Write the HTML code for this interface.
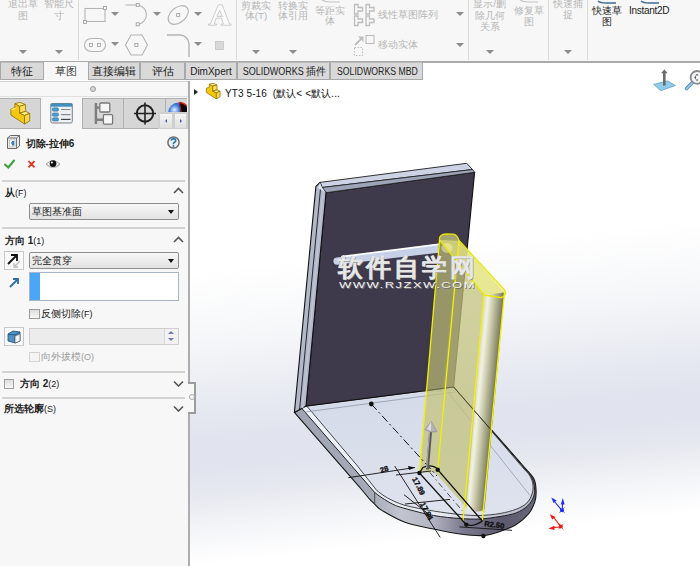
<!DOCTYPE html>
<html><head><meta charset="utf-8">
<style>
*{box-sizing:border-box}
html,body{margin:0;padding:0;width:700px;height:566px;overflow:hidden;background:#fff;font-family:"Liberation Sans",sans-serif;}
.a{position:absolute}
#ribbon{left:0;top:0;width:700px;height:63px;background:#f7f7f7;border-bottom:2px solid #a9a9a9}
.rt{position:absolute;font-size:9.8px;line-height:10px;color:#b6b6b6;text-align:center;white-space:nowrap}
.dk{color:#222}
.dd{position:absolute;width:0;height:0;border-left:4px solid transparent;border-right:4px solid transparent;border-top:4px solid #9a9a9a}
.sep{position:absolute;top:0;width:1px;height:60px;background:#dadada}
#tabs{left:0;top:62px;width:700px;height:19px;}
.tab{position:absolute;top:0;height:18px;background:#d9d9d9;border:1px solid #a8a8a8;border-top:1px solid #bdbdbd;font-size:11px;line-height:17px;text-align:center;color:#222;white-space:nowrap}
.tab.act{background:#f7f7f7;border-color:transparent;color:#444}
#panel{left:0;top:81px;width:189px;height:485px;background:#f7f7f7}
.hl{position:absolute;height:2px;background:#d3d3d3}
.b{font-weight:bold}
.pt{position:absolute;font-size:10px;line-height:11px;color:#222;white-space:nowrap}
</style></head><body>

<!-- RIBBON -->
<div id="ribbon" class="a">
  <div class="rt" style="left:-2.5px;top:-1.0px;width:50px">退出草</div>
  <div class="rt" style="left:-2.5px;top:10.5px;width:50px">图</div>
  <div class="rt" style="left:34.0px;top:-1.0px;width:50px">智能尺</div>
  <div class="rt" style="left:34.0px;top:10.5px;width:50px">寸</div>
  <div class="rt" style="left:231.0px;top:0.8px;width:50px">剪裁实</div>
  <div class="rt" style="left:231.0px;top:10.6px;width:50px">体(T)</div>
  <div class="rt" style="left:268.0px;top:0.8px;width:50px">转换实</div>
  <div class="rt" style="left:268.0px;top:10.6px;width:50px">体引用</div>
  <div class="rt" style="left:304.5px;top:6.0px;width:50px">等距实</div>
  <div class="rt" style="left:304.5px;top:16.0px;width:50px">体</div>
  <div class="rt" style="left:464.5px;top:-1.0px;width:50px">显示/删</div>
  <div class="rt" style="left:464.5px;top:10.8px;width:50px">除几何</div>
  <div class="rt" style="left:464.5px;top:22.0px;width:50px">关系</div>
  <div class="rt" style="left:503.6px;top:5.6px;width:50px">修复草</div>
  <div class="rt" style="left:503.6px;top:17.0px;width:50px">图</div>
  <div class="rt" style="left:542.6px;top:-1.5px;width:50px">快速捕</div>
  <div class="rt" style="left:542.6px;top:9.7px;width:50px">捉</div>
  <div class="rt dk" style="left:582.0px;top:6.0px;width:50px">快速草</div>
  <div class="rt dk" style="left:582.0px;top:17.0px;width:50px">图</div>
  <div class="dd" style="left:18.5px;top:49.5px;border-top-color:#8c8c8c"></div>
  <div class="dd" style="left:55.0px;top:49.5px;border-top-color:#8c8c8c"></div>
  <div class="sep" style="left:78px"></div>
  <div class="dd" style="left:251.5px;top:49.5px;border-top-color:#8c8c8c"></div>
  <div class="dd" style="left:288.5px;top:49.5px;border-top-color:#8c8c8c"></div>
  <div class="sep" style="left:236px"></div>
  <div class="rt" style="left:378px;top:10px;text-align:left;font-size:10px">线性草图阵列</div>
  <div class="dd" style="left:456.0px;top:12.0px;border-top-color:#8c8c8c"></div>
  <div class="rt" style="left:378px;top:40px;text-align:left;font-size:10px">移动实体</div>
  <div class="dd" style="left:456.0px;top:43.0px;border-top-color:#8c8c8c"></div>
  <div class="sep" style="left:468px"></div>
  <div class="dd" style="left:486.0px;top:49.5px;border-top-color:#8c8c8c"></div>
  <div class="sep" style="left:548px"></div>
  <div class="dd" style="left:563.7px;top:49.5px;border-top-color:#8c8c8c"></div>
  <div class="sep" style="left:587px"></div>
  <div class="rt dk" style="left:629px;top:6px;text-align:left;font-size:10px;letter-spacing:-0.3px">Instant2D</div>
  <div class="dd" style="left:111.0px;top:12.0px;border-top-color:#8c8c8c"></div>
  <div class="dd" style="left:153.4px;top:12.0px;border-top-color:#8c8c8c"></div>
  <div class="dd" style="left:194.4px;top:12.0px;border-top-color:#8c8c8c"></div>
  <div class="dd" style="left:111.0px;top:41.5px;border-top-color:#8c8c8c"></div>
  <div class="dd" style="left:194.4px;top:41.5px;border-top-color:#8c8c8c"></div>
  <svg class="a" style="left:0;top:0" width="700" height="62" viewBox="0 0 700 62">
    <g fill="none" stroke="#b4b4b4" stroke-width="1.1">
      <rect x="85" y="8.5" width="20" height="13"/>
      <path d="M125.5,5 H137.7 A9.7,9.7 0 0 1 137.7,24.3"/>
      <ellipse cx="178.2" cy="15" rx="11.5" ry="7.5" transform="rotate(-40 178.2 15)"/>
      <rect x="84.5" y="38.5" width="21" height="13" rx="6.5"/>
      <polygon points="131,35 142,35 147.5,45 142,55 131,55 125.5,45"/>
      <path d="M167,35 H180 A9,9 0 0 1 189,44 V57" stroke-width="1.4"/>
    </g>
    <g fill="#f6f6f6" stroke="#9c9c9c" stroke-width="0.8">
      <rect x="103.5" y="6.5" width="3" height="3"/><rect x="83.5" y="20.5" width="3" height="3"/>
      <rect x="136.2" y="3.5" width="3" height="3"/><rect x="136.2" y="22.8" width="3" height="3"/>
      <rect x="176.7" y="13.5" width="3" height="3"/>
      <rect x="89.5" y="43.5" width="3" height="3"/><rect x="97.5" y="43.5" width="3" height="3"/>
      <rect x="134.9" y="43.5" width="3" height="3"/>
    </g>
    <path d="M218.3,4.8 L222.3,4.8 L229.4,24 L231,24 L231,25.2 L221.3,25.2 L221.3,24 L223.4,24 L221.5,18.2 L216.2,18.2 L214.2,24 L216.6,24 L216.6,25.2 L208.6,25.2 L208.6,24 L210.4,24 Z M219.7,10.4 L222.4,16.4 L216.9,16.4 Z" fill="#fbfbfb" fill-rule="evenodd" stroke="#c2c2c2" stroke-width="0.8" stroke-linejoin="round"/>
    <rect x="215.5" y="41.5" width="8" height="8" fill="#d8d8d8" stroke="#c4c4c4" stroke-width="0.8"/>
    <g fill="none" stroke="#bdbdbd" stroke-width="1.1">
      <path d="M354.5,4.5 h3.5 v3 h4.5 v3.5 h-4.5 v3 h-3.5 z M366,4.5 h3.5 v3 h4.5 v3.5 h-4.5 v3 h-3.5 z M354.5,16 h3.5 v3 h4.5 v3.5 h-4.5 v3 h-3.5 z M366,16 h3.5 v3 h4.5 v3.5 h-4.5 v3 h-3.5 z" stroke-width="1.3"/>
      <path d="M355,45 L361.5,38.5" stroke-width="1.8"/><polygon points="363.5,36.5 363.5,42 358,36.5" fill="#bdbdbd" stroke="none"/>
      <rect x="366" y="35.5" width="8" height="8"/>
      <rect x="354.5" y="47.5" width="8" height="8" stroke-dasharray="1.5,1.5"/>
    </g>
    <g fill="none" stroke="#3d6e96" stroke-width="1.6">
      <path d="M598,1 Q600,3 606,3 H616"/>
      <path d="M641,1 Q643,3 649,3 H659"/>
    </g>
    <g fill="none" stroke="#c4c4c4" stroke-width="1.2">
      <path d="M322,0 Q325,2 330,2 H340"/>
      <path d="M520,0 Q523,2 528,2 H538"/>
    </g>
  </svg>
</div>
<!-- TABS -->
<div id="tabs" class="a">
  <div class="tab" style="left:0;width:44px">特征</div>
  <div class="tab act" style="left:44px;width:44px">草图</div>
  <div class="tab" style="left:88px;width:52px">直接编辑</div>
  <div class="tab" style="left:140px;width:45px">评估</div>
  <div class="tab" style="left:185px;width:52px;font-size:10px">DimXpert</div>
  <div class="tab" style="left:237px;width:93px"><span style="display:inline-block;transform:scaleX(0.9);transform-origin:50% 50%;white-space:nowrap;font-size:10px">SOLIDWORKS <span style="font-size:11px">插件</span></span></div>
  <div class="tab" style="left:330px;width:93px"><span style="display:inline-block;transform:scaleX(0.87);transform-origin:50% 50%;white-space:nowrap;font-size:10px">SOLIDWORKS MBD</span></div>
</div>

<!-- PANEL -->
<div id="panel" class="a">
  <div class="hl" style="left:0;top:0px;width:188px;height:1px;background:#d0d0d0"></div>
  <div class="hl" style="left:0;top:15px;width:188px;height:1px;background:#e0e0e0"></div>
  <div class="a" style="left:90px;top:5px;width:6px;height:6px;border:1px solid #9a9a9a;border-radius:50%;background:#d8d8d8"></div>
</div>
<!-- panel tabs -->
<div class="a" style="left:0;top:98px;width:188px;height:31px;border-bottom:1px solid #a9a9a9"></div>
<div class="a" style="left:0;top:98px;width:41px;height:31px;background:#d6d6d6;border:1px solid #b0b0b0;border-left:none"></div>
<div class="a" style="left:41px;top:97px;width:41px;height:33px;background:#f7f7f7"></div>
<div class="a" style="left:82px;top:98px;width:42px;height:31px;background:#d6d6d6;border:1px solid #b0b0b0"></div>
<div class="a" style="left:123px;top:98px;width:43px;height:31px;background:#d6d6d6;border:1px solid #b0b0b0"></div>
<div class="a" style="left:165px;top:98px;width:22px;height:31px;background:#d6d6d6;border:1px solid #b0b0b0;border-right:none;overflow:hidden">
  <svg width="22" height="31" style="position:absolute;left:0;top:0"><defs><radialGradient id="sph" cx="0.3" cy="0.35" r="0.7"><stop offset="0" stop-color="#e8f0ff"/><stop offset="0.35" stop-color="#3d7ce0"/><stop offset="1" stop-color="#123a90"/></radialGradient></defs>
  <circle cx="12.6" cy="14" r="10.5" fill="url(#sph)"/>
  <path d="M13,3.5 A10.5,10.5 0 0 1 23.1,14 L23.1,20 L15.5,20 Z" fill="#080808"/>
  <path d="M13,3.5 A10.5,10.5 0 0 1 22.5,10" stroke="#d8201e" stroke-width="1.3" fill="none"/>
  <path d="M13.5,4 L15.5,15" stroke="#d8201e" stroke-width="0.9"/>
  </svg>
</div>
<div class="a" style="left:158px;top:112px;width:30px;height:17px;background:#d0d0d0"></div>
<div class="a" style="left:159px;top:113px;width:14px;height:16px;background:linear-gradient(#f6f6f6,#dedede);border:1px solid #cfcfcf"></div>
<div class="a" style="left:174px;top:113px;width:13px;height:16px;background:linear-gradient(#f6f6f6,#dedede);border:1px solid #cfcfcf"></div>
<div class="a" style="left:164.5px;top:118.5px;width:0;height:0;border-top:2.5px solid transparent;border-bottom:2.5px solid transparent;border-right:2.5px solid #4a5cb0"></div>
<div class="a" style="left:180px;top:118.5px;width:0;height:0;border-top:2.5px solid transparent;border-bottom:2.5px solid transparent;border-left:2.5px solid #4a5cb0"></div>
<!-- tab icons -->
<svg class="a" style="left:0;top:98px" width="188" height="31" viewBox="0 0 188 31">
  <!-- feature L-block yellow -->
  <g stroke="#8f6c00" stroke-width="0.8" stroke-linejoin="round">
    <polygon points="10.9,11.1 14.9,9.7 14.9,5.7 19.7,8.3 19.7,15.1 24.6,17.4 24.6,26 10.9,17.1" fill="#f4c810"/>
    <polygon points="14.9,5.7 20,4.3 25.4,6.6 19.7,8.3" fill="#ffeb80"/>
    <polygon points="19.7,8.3 25.4,6.6 25.7,13.4 19.7,15.1" fill="#fbe060"/>
    <polygon points="19.7,15.1 25.7,13.4 29.7,15.4 24.6,17.4" fill="#ffec85"/>
    <polygon points="24.6,17.4 29.7,15.4 29.7,22.9 24.6,26" fill="#f7da48"/>
    <polygon points="10.9,11.1 14.9,9.7 15.5,11 12.2,12.2" fill="#ffe46a" stroke="none"/>
  </g>
  <!-- property manager icon -->
  <rect x="50.8" y="5.5" width="21.5" height="19.5" rx="1.5" fill="#eef1f4" stroke="#7a7f86" stroke-width="1"/>
  <rect x="50.8" y="5.5" width="21.5" height="3.2" fill="#3f8fc0"/>
  <rect x="52.3" y="9.8" width="6.2" height="3.4" rx="1.2" fill="#4a9ccc" stroke="#2f6f9a" stroke-width="0.5"/>
  <rect x="52.3" y="14.9" width="6.2" height="3.4" rx="1.2" fill="#4a9ccc" stroke="#2f6f9a" stroke-width="0.5"/>
  <rect x="52.3" y="19.7" width="6.2" height="3.4" rx="1.2" fill="#4a9ccc" stroke="#2f6f9a" stroke-width="0.5"/>
  <path d="M61,11.5h9.5M61,16.6h9.5" stroke="#8a8a8a" stroke-width="1.2"/>
  <path d="M61,21.4h9.5" stroke="#444" stroke-width="1.2"/>
  <!-- config manager icon -->
  <path d="M95.9,5 v21 M96,9.6 h4 M96,21.8 h7.5" stroke="#7d7d7d" stroke-width="2.4" fill="none"/>
  <rect x="99.8" y="5" width="10" height="9" rx="1" fill="#f6f6f6" stroke="#787878" stroke-width="1.3"/>
  <rect x="103.4" y="16.6" width="9.2" height="9.5" rx="1" fill="#f6f6f6" stroke="#787878" stroke-width="1.3"/>
  <!-- target crosshair -->
  <circle cx="145" cy="15.5" r="8.2" fill="none" stroke="#222" stroke-width="2"/>
  <path d="M134 15.5h22M145 4.5v22" stroke="#222" stroke-width="1.6"/>
</svg>
<!-- feature header -->
<svg class="a" style="left:6px;top:134px" width="15" height="16" viewBox="0 0 15 16">
  <path d="M1.5,4 L4.5,1.5 L13.5,1.5 L13.5,12 L10.5,14.5 L1.5,14.5 Z" fill="#e8eaec" stroke="#666" stroke-width="1"/>
  <path d="M1.5,4 L10.5,4 L13.5,1.5 M10.5,4 V14.5" stroke="#666" fill="none" stroke-width="0.9"/>
  <rect x="3.5" y="6" width="5.5" height="6.5" fill="#fff" stroke="#aaa" stroke-width="0.5"/>
  <path d="M6,7 h2.3 v4.5 h-2.3 z" fill="#2c7cb8"/>
  <path d="M5,8 h1.3 v2.5 h-1.3 z" fill="#6fb0dc"/>
</svg>
<div class="pt b" style="left:25.5px;top:137.5px;font-size:10px">切除-拉伸6</div>
<svg class="a" style="left:166px;top:134.5px" width="15" height="15" viewBox="0 0 15 15">
  <circle cx="7.5" cy="7.5" r="5.6" fill="#f0f0f0" stroke="#6e6e6e" stroke-width="1.5"/>
  <path d="M5.3,5.6 Q5.5,3.6 7.5,3.6 Q9.8,3.7 9.7,5.6 Q9.6,6.9 8.1,7.6 Q7.4,8 7.4,9.2" stroke="#2a7ab8" stroke-width="1.7" fill="none"/>
  <circle cx="7.4" cy="11" r="0.95" fill="#2a7ab8"/>
</svg>
<svg class="a" style="left:0px;top:155px" width="65" height="18" viewBox="0 0 65 18">
  <path d="M5,9.5 L8.3,12.5 L14,5.5" stroke="#3aa03a" stroke-width="2" fill="none" stroke-linecap="round"/>
  <path d="M28.5,6.2 L34.5,12.3 M34.5,6.2 L28.5,12.3" stroke="#e0301c" stroke-width="1.8" fill="none"/>
  <path d="M46,9 Q53,2.5 60,9 Q53,15 46,9 Z" fill="#fff" stroke="#8a8a8a" stroke-width="0.8"/>
  <path d="M47,10 Q53,15 59.5,10" stroke="#bbb" stroke-width="1.2" fill="none"/>
  <circle cx="53" cy="8.6" r="3.4" fill="#111"/>
  <circle cx="51.9" cy="7.5" r="1" fill="#fff"/>
</svg>
<div class="hl" style="left:2px;top:180px;width:183px"></div>
<div class="pt b" style="left:5px;top:187px">从<span style="font-weight:normal;font-size:9px">(F)</span></div>
<svg class="a" style="left:173px;top:187px" width="11" height="7"><path d="M1 6 L5.5 1.5 L10 6" stroke="#555" stroke-width="1.6" fill="none"/></svg>
<div class="a" style="left:29px;top:203px;width:150px;height:17px;border:1px solid #8e8e8e;border-radius:2px;background:linear-gradient(#f7f7f7,#e3e3e3)"></div>
<div class="pt" style="left:32px;top:206px">草图基准面</div>
<div class="a" style="left:168px;top:210px;width:0;height:0;border-left:3.5px solid transparent;border-right:3.5px solid transparent;border-top:4px solid #111"></div>
<div class="hl" style="left:2px;top:227px;width:183px"></div>

<div class="pt b" style="left:5px;top:235px">方向 1<span style="font-weight:normal;font-size:9px">(1)</span></div>
<svg class="a" style="left:173px;top:236px" width="11" height="7"><path d="M1 6 L5.5 1.5 L10 6" stroke="#555" stroke-width="1.6" fill="none"/></svg>
<div class="a" style="left:4px;top:251px;width:20px;height:19px;border:1px solid #c8c8c8;background:#f9f9f9"></div>
<svg class="a" style="left:5px;top:252px" width="18" height="17">
  <path d="M3 12 L12 3 M6 3 H12 V9" stroke="#111" stroke-width="1.8" fill="none"/>
  <path d="M9 15 L15 9 M9 11 V15 H13" stroke="#bbb" stroke-width="1.3" fill="none"/>
</svg>
<div class="a" style="left:29px;top:252px;width:150px;height:17px;border:1px solid #8e8e8e;border-radius:2px;background:linear-gradient(#f7f7f7,#e3e3e3)"></div>
<div class="pt" style="left:32px;top:255px">完全贯穿</div>
<div class="a" style="left:168px;top:259px;width:0;height:0;border-left:3.5px solid transparent;border-right:3.5px solid transparent;border-top:4px solid #111"></div>
<svg class="a" style="left:8px;top:277px" width="13" height="11"><path d="M2 10 L10 2 M5 2 H10 V7" stroke="#2f6fa8" stroke-width="1.8" fill="none"/></svg>
<div class="a" style="left:29px;top:272px;width:150px;height:29px;border:1px solid #a8b4c8;background:#fff"></div>
<div class="a" style="left:30px;top:273px;width:10px;height:27px;background:#4ba6f5"></div>
<div class="a" style="left:29px;top:309px;width:11px;height:10px;border:1px solid #9c9c9c;background:linear-gradient(#ddd,#f8f8f8)"></div>
<div class="pt" style="left:41px;top:308px">反侧切除<span style="font-size:9px">(F)</span></div>
<div class="a" style="left:4px;top:327px;width:20px;height:19px;border:1px solid #c8c8c8;background:#f9f9f9"></div>
<svg class="a" style="left:5px;top:328px" width="18" height="17">
  <path d="M3 6 L8 3 L15 4 L15 13 L10 15 L3 13 Z" fill="#4f93c6" stroke="#244d70" stroke-width="0.8"/>
  <path d="M3 6 L10 7 L15 4 M10 7 V15" stroke="#244d70" stroke-width="0.8" fill="none"/>
  <polygon points="10,8 15,6 15,13 10,15" fill="#f2f2f2" stroke="#555" stroke-width="0.6"/>
</svg>
<div class="a" style="left:29px;top:328px;width:150px;height:17px;border:1px solid #cfcfcf;background:#ececec"></div>
<div class="a" style="left:164px;top:329px;width:14px;height:15px;border-left:1px solid #d8d8d8;background:#f2f2f2"></div>
<div class="a" style="left:168px;top:331px;width:0;height:0;border-left:3px solid transparent;border-right:3px solid transparent;border-bottom:3px solid #6a7fb8"></div>
<div class="a" style="left:168px;top:338px;width:0;height:0;border-left:3px solid transparent;border-right:3px solid transparent;border-top:3px solid #6a7fb8"></div>
<div class="a" style="left:29px;top:352px;width:11px;height:10px;border:1px solid #d2d2d2;background:#f4f4f4"></div>
<div class="pt" style="left:41px;top:351px;color:#9a9a9a">向外拔模<span style="font-size:9px">(O)</span></div>
<div class="hl" style="left:2px;top:371px;width:183px"></div>

<div class="a" style="left:4px;top:379px;width:10px;height:10px;border:1px solid #a0a0a0;background:linear-gradient(#ddd,#f8f8f8)"></div>
<div class="pt b" style="left:20px;top:378px">方向 2<span style="font-weight:normal;font-size:9px">(2)</span></div>
<svg class="a" style="left:173px;top:380px" width="11" height="7"><path d="M1 1.5 L5.5 6 L10 1.5" stroke="#555" stroke-width="1.6" fill="none"/></svg>
<div class="hl" style="left:2px;top:397px;width:183px"></div>
<div class="pt b" style="left:4px;top:403px">所选轮廓<span style="font-weight:normal;font-size:9px">(S)</span></div>
<svg class="a" style="left:173px;top:405px" width="11" height="7"><path d="M1 1.5 L5.5 6 L10 1.5" stroke="#555" stroke-width="1.6" fill="none"/></svg>

<div class="a" style="left:188px;top:81px;width:2px;height:485px;background:#adadad"></div>

<!-- VIEWPORT -->
<div class="a" style="left:190px;top:81px;width:510px;height:485px;background:linear-gradient(174deg,#ffffff 0px,#ffffff 190px,#f6f7f9 258px,#eceef4 302px,#e5e8f0 333px,#e1e4ee 358px,#e1e4ee 388px,#e7e9f0 415px,#f4f5f8 448px,#ffffff 482px)"></div>
<div class="a" style="left:188px;top:382px;width:8px;height:32px;background:#f7f7f7;border:2px solid #9c9c9c;border-left:none"></div>
<div class="a" style="left:189px;top:394px;width:6px;height:6px;border:1px solid #aaa;border-radius:50%"></div>
<svg class="a" style="left:0;top:0" width="700" height="566" viewBox="0 0 700 566">
  <defs>
    <linearGradient id="side" gradientUnits="userSpaceOnUse" x1="300" y1="0" x2="540" y2="0">
      <stop offset="0" stop-color="#9ea4b2"/><stop offset="0.3" stop-color="#a6abb8"/><stop offset="0.42" stop-color="#c2c5d0"/><stop offset="0.55" stop-color="#b4b6c3"/><stop offset="0.68" stop-color="#7c7a8e"/><stop offset="0.85" stop-color="#5d5a6e"/><stop offset="1" stop-color="#6a687c"/>
    </linearGradient>
    <linearGradient id="strip" gradientUnits="userSpaceOnUse" x1="300" y1="0" x2="540" y2="0">
      <stop offset="0" stop-color="#eef2fa"/><stop offset="0.6" stop-color="#e6eaf3"/><stop offset="0.8" stop-color="#c4c8d6"/><stop offset="1" stop-color="#b0b4c4"/>
    </linearGradient>
    <linearGradient id="cyl" gradientUnits="userSpaceOnUse" x1="509.4" y1="0" x2="530.4" y2="0" gradientTransform="skewX(-5.3)">
      <stop offset="0" stop-color="#cfcfae"/><stop offset="0.3" stop-color="#f2f2e2"/><stop offset="0.6" stop-color="#c4c4a4"/><stop offset="1" stop-color="#7e7e62"/>
    </linearGradient>
    <linearGradient id="basetop" gradientUnits="userSpaceOnUse" x1="0" y1="390" x2="0" y2="520">
      <stop offset="0" stop-color="#d4dae8"/><stop offset="1" stop-color="#dfe3ee"/>
    </linearGradient>
  </defs>
  <path d="M294.4,412.4 L359.8,487.3 C361.4,489.2 366.9,496.1 369.4,498.9 C371.9,501.7 372.6,502.2 374.7,504.2 C376.8,506.1 377.1,507.6 382.1,510.6 C387.2,513.6 396.4,519.2 405.0,522.3 C413.6,525.4 424.4,527.0 433.6,529.0 C442.8,531.0 451.7,532.9 460.0,534.0 C468.3,535.1 476.8,535.9 483.5,535.5 C490.2,535.1 494.6,533.3 500.0,531.5 C505.4,529.7 511.4,527.5 516.2,524.5 C521.0,521.5 525.8,517.3 528.9,513.5 C532.0,509.7 533.6,505.5 534.8,501.8 C536.0,498.1 536.2,494.9 536.1,491.2 C536.0,487.5 535.8,483.0 534.2,479.5 C532.7,476.0 528.0,471.6 526.8,470.0 L453.6,387 L306,406 Z" fill="url(#side)" stroke="#161616" stroke-width="1.1" stroke-linejoin="round"/>
  <path d="M301.5,408 L374.7,492.5 C375.9,493.4 379.1,495.9 382.1,497.9 C385.1,499.8 388.9,502.4 392.7,504.2 C396.5,506.0 398.2,506.6 405.0,508.5 C411.8,510.4 424.4,513.8 433.6,515.5 C442.8,517.2 452.3,517.9 460.0,518.5 C467.7,519.1 473.3,519.3 480.0,519.0 C486.7,518.7 494.0,517.5 500.0,516.5 C506.0,515.5 511.6,514.6 516.2,512.9 C520.8,511.1 524.6,508.6 527.5,506.0 C530.4,503.4 532.3,500.0 533.5,497.0 C534.7,494.0 534.8,491.2 534.5,488.0 C534.2,484.8 533.4,481.0 532.0,478.0 C530.6,475.0 527.0,471.3 526.0,470.0 L453.6,387 L306,406 Z" fill="url(#strip)" stroke="#1e1e1e" stroke-width="1" stroke-linejoin="round"/>
  <path d="M307.6,407 L356.7,465 L376.8,490.5 C378.6,491.7 382.7,495.4 387.4,497.9 C392.1,500.4 397.3,503.1 405.0,505.3 C412.7,507.5 424.4,509.5 433.6,511.0 C442.8,512.5 452.3,513.8 460.0,514.5 C467.7,515.2 473.3,515.7 480.0,515.5 C486.7,515.3 494.0,514.5 500.0,513.5 C506.0,512.5 511.7,510.9 516.2,509.2 C520.7,507.4 524.2,505.5 526.8,503.0 C529.4,500.5 531.0,497.0 532.0,494.0 C533.0,491.0 533.3,488.0 533.0,485.0 C532.7,482.0 531.5,478.7 530.0,476.0 C528.5,473.3 525.0,470.2 524.0,469.0 L453.6,387 L306,406 Z" fill="url(#basetop)" stroke="#2a2a2a" stroke-width="0.85" stroke-linejoin="round"/>
  <path d="M374.7,492.5 L374.7,504.2" stroke="#333" stroke-width="0.8"/>
  <path d="M302.4,412.4 L455,392" stroke="#97a0b2" stroke-width="0.9"/>
  <path d="M448,392 L530,495.5" stroke="#8d96a8" stroke-width="0.7"/>
  <polygon points="326,192.7 474.6,172.3 453.6,387 306,406" fill="#3e3a4c" stroke="#101010" stroke-width="1.1"/>
  <polygon points="320,182.4 466.7,163.3 472.5,169.5 322,187.5" fill="#cdd3e4" stroke="#1c1c1c" stroke-width="0.9"/>
  <polygon points="322,187.5 472.5,169.5 474.6,172.3 326,192.7" fill="#9ea4b7" stroke="#1c1c1c" stroke-width="0.8"/>
  <polygon points="315.9,186.4 320,182.4 322,187.5 326,192.7 306,406 294.4,412.4" fill="#b1b8c8" stroke="#101010" stroke-width="1.1" stroke-linejoin="round"/>
  <path d="M320.5,189 L299.5,410" stroke="#1a1a1a" stroke-width="0.9"/>
  <path d="M323.2,191 L302.6,408" stroke="#bcc3d2" stroke-width="1.6"/>
  <polygon points="320,182.4 322,187.5 326,192.7 318,188" fill="#dfe4f0"/>
  <path d="M337,257.5 L438.4,244.3 L438.4,252.7 L337,264.7 A3.6,3.6 0 0 1 337,257.5 Z" fill="#c6d1e8"/>
  <path d="M342,256.6 L438.4,244.3" stroke="#ffffff" stroke-width="1.8" stroke-linecap="round"/>
  <ellipse cx="447" cy="248" rx="5.5" ry="5" fill="#f2f2f2"/>
  <polygon points="439.5,240.0 459.0,240.7 504.5,292.5 484.5,512.0 466.5,508.0 434.5,472.0 419.4,473.0" fill="#c3c27d" fill-opacity="0.74"/>
  <polygon points="439.5,240.0 459.0,240.7 442.5,391.5 421.4,391.2" fill="#2a2a10" fill-opacity="0.07"/>
  <path d="M439.5,240 C439,236 442,234 446,234 L453,234.2 C456,234.5 458,237 459,240.5 L504,289.5 C507,293 505,297.5 500.5,297.5 L484,295 Z" fill="#fafa8a" fill-opacity="0.55"/>
  <path d="M484.0,295.0 504.5,292.5 484.5,509.0 Q476,515 466.5,508 Z" fill="url(#cyl)"/>
  <path d="M453.6,387 L493,432" stroke="#3a3a2c" stroke-width="1" stroke-opacity="0.85"/>
  <path d="M421.4,391.2 L453.6,387" stroke="#55553f" stroke-width="0.7"/>
  <path d="M475,411.5 L493,432" stroke="#2e2e24" stroke-width="1" stroke-opacity="0.8"/>
  <path d="M439.5,240 C439,236 442,234 446,234 L453,234.2 C456,234.5 458,237 459,240.5 L504,289.5 C507,293 505,297.5 500.5,297.5 L484,295 Z" fill="none" stroke="#e8e800" stroke-width="1.3" stroke-linejoin="round"/>
  <path d="M439.5,240.0 419.4,473.0 M459.0,240.7 437.7,469.7 M484.0,295.0 463.0,521.0 M504.5,292.5 482.3,521.0" stroke="#f2f200" stroke-width="1.3" fill="none"/>
  <path d="M371.3,404 L437,476" stroke="#111" stroke-width="1" stroke-dasharray="8,3,2,3"/>
  <circle cx="371.3" cy="404" r="2.4" fill="#111"/>
  <path d="M419.4,473 L466.3,524.6 Q474,527 482.3,521 L437.7,469.7 C436,466 428,464.5 423,467.5 L419.4,473" stroke="#111" stroke-width="1.3" fill="none"/>
  <path d="M429.8,472.5 L462.3,510.7" stroke="#222" stroke-width="0.8" stroke-dasharray="6,3,1.5,3"/>
  <path d="M348.3,477.7 L415,467.5 M396,475 L431,471 M394.7,466 L440.2,537.4 M404,494.7 L431,516 M405,504 L450,499.4 M459.4,526.9 L512,530.3" stroke="#111" stroke-width="0.9" fill="none"/>
  <polygon points="415,467.5 408,466 409,470" fill="#111"/>
  <circle cx="419.4" cy="473" r="2.2" fill="#111"/>
  <circle cx="437.7" cy="469.7" r="2.2" fill="#111"/>
  <circle cx="483.4" cy="536" r="2.2" fill="#111"/>
  <circle cx="466.3" cy="524.6" r="2.2" fill="#111"/>
  <text x="381" y="473" font-size="7.5" font-weight="bold" fill="#111" stroke="#111" stroke-width="0.35" transform="rotate(-18 381 473)">28</text>
  <text x="412" y="479" font-size="7.5" font-weight="bold" fill="#111" stroke="#111" stroke-width="0.35" transform="rotate(62 412 479)">17.89</text>
  <text x="420" y="504" font-size="7.5" font-weight="bold" fill="#111" stroke="#111" stroke-width="0.35" transform="rotate(62 420 504)">17.94</text>
  <text x="484" y="526" font-size="7.5" font-weight="bold" fill="#111" stroke="#111" stroke-width="0.35" transform="rotate(8 484 526)">R2.50</text>
  <path d="M430.6,431 L427.4,469.5" stroke="#5a5860" stroke-width="3"/>
  <path d="M429.6,432 L426.6,468" stroke="#b8b8bc" stroke-width="0.9"/>
  <path d="M431.1,421.5 L424.8,429.5 Q430,433.5 437,431.6 Z" fill="#b4b4b6" stroke="#8a8a8e" stroke-width="0.6"/>
  <path d="M431.1,421.5 L427,429 Q429,430.5 431,430.5 Z" fill="#dcdcde"/>
  <path d="M561.7,510.2 L554,501 M562.3,510 L562.5,503" stroke="#1a2ff0" stroke-width="1.1"/>
  <polygon points="551.3,497.6 556.6,500.4 553.6,503" fill="#1a2ff0"/><polygon points="562.8,498 564.6,504.5 560.8,504.5" fill="#1a2ff0"/>
  <circle cx="562" cy="510.2" r="2" fill="#1a2ff0"/><path d="M559.5,507.5 L564.5,512.8 M564.5,507.5 L559.5,512.8" stroke="#1a2ff0" stroke-width="0.7"/>
  <path d="M560.8,526.6 L553,516.5 M560.8,527 L554,527.4" stroke="#f01a1a" stroke-width="1.1"/>
  <polygon points="549.7,514.2 555.6,517 552.2,519.6" fill="#f01a1a"/><polygon points="548.4,528.4 554.5,525.8 554.5,530" fill="#f01a1a"/>
  <circle cx="560.8" cy="526.6" r="2" fill="#f01a1a"/><path d="M558.3,523.9 L563.3,529.3 M563.3,523.9 L558.3,529.3" stroke="#f01a1a" stroke-width="0.7"/>
</svg>
<!-- watermark -->
<div class="a" style="left:337.5px;top:251px;font-size:25px;line-height:32px;color:#ececec;font-weight:normal;-webkit-text-stroke:1px #e6e6e6;letter-spacing:3px;white-space:nowrap;text-shadow:1px 1px 0 #8a8a8a,-0.5px -0.5px 0 #b8b8b8">软件自学网</div>
<div class="a" style="left:338.5px;top:279.5px;font-size:9px;line-height:10px;color:#f2f2f2;letter-spacing:1px;white-space:nowrap;transform:scaleX(1.45);transform-origin:0 0;text-shadow:0.6px 0.6px 0 #707070">WWW.RJZXW.COM</div>
<!-- tree header -->
<div class="a" style="left:194px;top:89px;width:0;height:0;border-top:3.5px solid transparent;border-bottom:3.5px solid transparent;border-left:4px solid #222"></div>
<svg class="a" style="left:204px;top:83px" width="18" height="16" viewBox="10 4 20 22">
  <g stroke="#8f6c00" stroke-width="1" stroke-linejoin="round">
    <polygon points="10.9,11.1 14.9,9.7 14.9,5.7 19.7,8.3 19.7,15.1 24.6,17.4 24.6,26 10.9,17.1" fill="#f4c810"/>
    <polygon points="14.9,5.7 20,4.3 25.4,6.6 19.7,8.3" fill="#ffeb80"/>
    <polygon points="19.7,8.3 25.4,6.6 25.7,13.4 19.7,15.1" fill="#fbe060"/>
    <polygon points="19.7,15.1 25.7,13.4 29.7,15.4 24.6,17.4" fill="#ffec85"/>
    <polygon points="24.6,17.4 29.7,15.4 29.7,22.9 24.6,26" fill="#f7da48"/>
  </g>
</svg>
<div class="a" style="left:225px;top:88px;font-size:10px;line-height:11px;color:#111;white-space:nowrap;letter-spacing:0.1px">YT3 5-16 &nbsp;(默认&lt; &lt;默认...</div>
<!-- view icons -->
<svg class="a" style="left:645px;top:62px" width="55" height="35" viewBox="0 0 55 35">
  <polygon points="8.7,22.4 22.8,18.9 30.3,23.6 15.7,28.7" fill="#90cbe9" stroke="#5d9fc6" stroke-width="0.8"/>
  <path d="M19.3,23.5 V10.5" stroke="#6a6a6a" stroke-width="2.6"/>
  <polygon points="16,11.3 19.3,7.6 22.6,11.3" fill="#6a6a6a"/>
  <path d="M41.5,26.6 L47.5,20.6" stroke="#4f8fb8" stroke-width="3.6" stroke-linecap="round"/>
  <path d="M41.5,26.6 L47.5,20.6" stroke="#8fc6e6" stroke-width="2" stroke-linecap="round"/>
  <circle cx="52" cy="15.4" r="6.4" fill="#f2f4f6" stroke="#8a8a8a" stroke-width="1.8"/>
  <polygon points="49.2,15.4 51,13.6 51,17.2" fill="#555"/>
  <polygon points="52,11.8 53.6,13.4 50.4,13.4" fill="#555"/>
  <polygon points="52,19 53.6,17.4 50.4,17.4" fill="#555"/>
</svg>
</body></html>
